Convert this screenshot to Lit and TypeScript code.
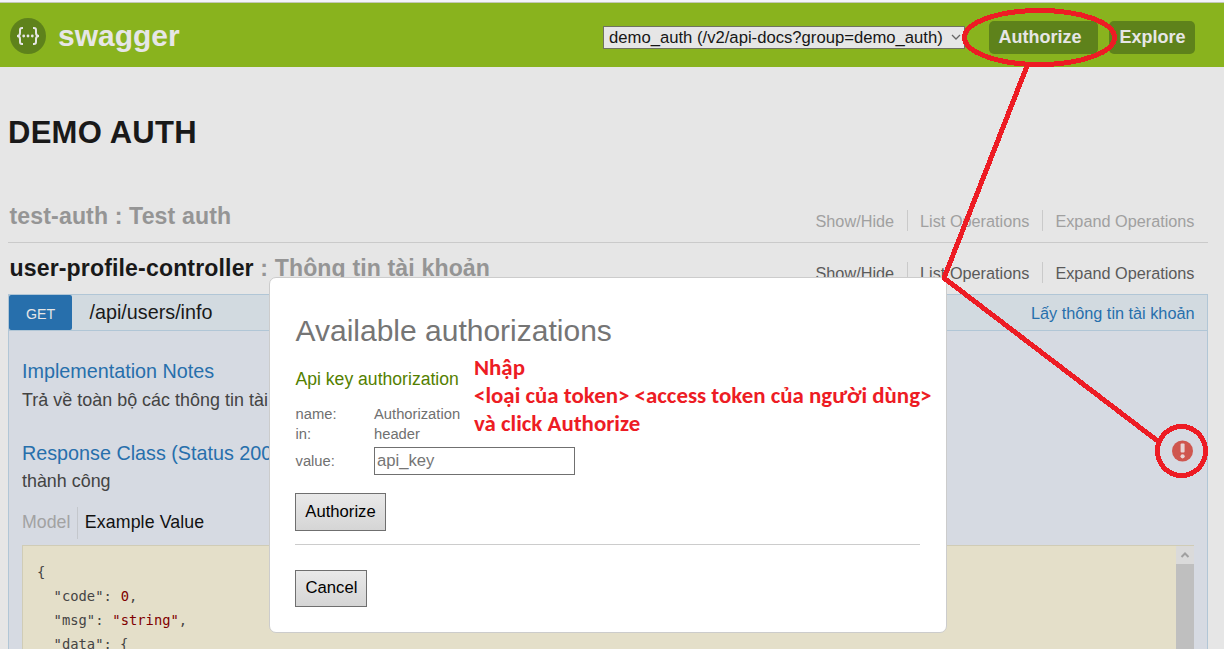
import { LitElement, html, svg, css } from "lit";
import { customElement, property } from "lit/decorators.js";

@customElement("resource-heading")
class ResourceHeading extends LitElement {
  @property() name = "";
  @property() description = "";
  @property({ type: Boolean, reflect: true }) active = false;

  static styles = css`
    :host {
      display: flex;
      justify-content: space-between;
      box-sizing: border-box;
      height: 52px;
      margin: 0 16px 0 8px;
      border-bottom: 1px solid #cacaca;
      color: #959595;
    }
    :host([active]) {
      border-bottom-color: transparent;
    }
    .title {
      margin: 0;
      padding: 11px 0 0 1.5px;
      font-size: 23.1px;
      line-height: 28px;
      font-weight: 700;
      letter-spacing: 0.13px;
      white-space: pre;
    }
    :host([active]) .name {
      color: #191919;
    }
    .ops {
      display: flex;
      margin: 19px 13.5px 0 0;
      padding: 0;
      list-style: none;
      height: 21px;
      font-size: 16.25px;
      line-height: 22px;
      color: #a0a0a0;
    }
    :host([active]) .ops {
      color: #5a5a5a;
    }
    .op + .op {
      border-left: 1px solid #cacaca;
      margin-left: 13px;
      padding-left: 12px;
    }
  `;

  render() {
    return html`
      <h2 class="title"><span class="name">${this.name}</span> : ${this.description}</h2>
      <ul class="ops">
        ${["Show/Hide", "List Operations", "Expand Operations"].map((o) => html`<li class="op">${o}</li>`)}
      </ul>
    `;
  }
}

@customElement("auth-dialog")
class AuthDialog extends LitElement {
  static styles = css`
    :host {
      display: block;
      box-sizing: border-box;
      background: #fff;
      border: 1px solid #ccc;
      border-radius: 7px;
      padding: 36px 26px 0 25px;
      color: #707070;
    }
    .title {
      margin: 0;
      font-size: 30px;
      line-height: 34px;
      font-weight: 400;
      color: #757575;
      padding-left: 0.5px;
    }
    .scheme {
      margin-top: 20px;
      padding-left: 0.5px;
      font-size: 17.6px;
      line-height: 22px;
      color: #547f00;
    }
    .fields {
      display: grid;
      grid-template-columns: 79px 201px;
      grid-template-rows: 20px 20px 34px;
      align-items: center;
      margin-top: 14px;
      font-size: 14.75px;
      line-height: 20px;
    }
    .label {
      padding-left: 0.5px;
    }
    .field {
      box-sizing: border-box;
      height: 28px;
      border: 1px solid #707070;
      padding: 0 2px;
      font-size: 16.67px;
      line-height: 26px;
      color: #757575;
    }
    .button {
      display: block;
      box-sizing: border-box;
      border: 1px solid #6f6f6f;
      background: linear-gradient(#e9e9e9, #d5d5d5);
      padding: 0;
      font: 16.67px "Liberation Sans", Arial, sans-serif;
      color: #000;
    }
    .submit {
      width: 91px;
      height: 38px;
      margin-top: 15px;
    }
    .rule {
      height: 1px;
      margin-top: 13px;
      background: #ccc;
    }
    .cancel {
      width: 72px;
      height: 37px;
      margin-top: 25px;
      padding: 0 0 2px 1px;
    }
  `;

  render() {
    return html`
      <h3 class="title">Available authorizations</h3>
      <div class="scheme">Api key authorization</div>
      <div class="fields">
        <span class="label">name:</span><span>Authorization</span>
        <span class="label">in:</span><span>header</span>
        <span class="label">value:</span>
        <div class="field">api_key</div>
      </div>
      <button class="button submit">Authorize</button>
      <div class="rule"></div>
      <button class="button cancel">Cancel</button>
    `;
  }
}

@customElement("app-root")
class AppRoot extends LitElement {
  static styles = css`
    :host {
      display: block;
      position: relative;
      height: 649px;
      overflow: hidden;
      background: #e6e6e6;
      font-family: "Liberation Sans", Arial, sans-serif;
    }
    .bar {
      display: flex;
      align-items: center;
      box-sizing: border-box;
      height: 67px;
      padding: 2px 29px 0 10px;
      border-top: 2px solid #f3f3fb;
      background: linear-gradient(#c3c8b8 1px, #89b31e 1px);
      background-origin: padding-box;
    }
    .logo {
      width: 36px;
      height: 36px;
    }
    .brand {
      flex: 1;
      margin-left: 12px;
      font-size: 30px;
      line-height: 34px;
      font-weight: 700;
      color: #e6e6e6;
    }
    .picker {
      display: flex;
      align-items: center;
      box-sizing: border-box;
      width: 362px;
      height: 23px;
      margin-top: 3px;
      border: 1px solid #6f7360;
      background: #e6e6e6;
      padding-left: 5px;
      font-size: 16.67px;
      line-height: 21px;
      color: #161616;
      white-space: nowrap;
    }
    .chevron {
      width: 10px;
      height: 8px;
      margin-left: 8px;
    }
    .action {
      box-sizing: border-box;
      height: 33px;
      margin-top: 3px;
      border-radius: 5px;
      background: #5e821b;
      padding-left: 9.5px;
      font-size: 18px;
      line-height: 32px;
      font-weight: 700;
      color: #e6e6e6;
    }
    .authorize {
      width: 109px;
      margin-left: 24px;
    }
    .explore {
      width: 86px;
      margin-left: 11px;
      padding-left: 10.5px;
    }
    .api-title {
      margin: 47px 0 0 8px;
      font-size: 31px;
      line-height: 38px;
      font-weight: 700;
      letter-spacing: 0.25px;
      color: #191919;
    }
    .resources {
      margin-top: 39px;
    }
    .operation {
      box-sizing: border-box;
      height: 380px;
      margin: -1px 16px 0 8px;
      border: 1px solid #b1c6d6;
      background: #d6dae2;
    }
    .op-head {
      display: flex;
      align-items: center;
      height: 35px;
      border-bottom: 1px solid #b1c6d6;
      background: #d2dae0;
    }
    .method {
      width: 63px;
      height: 35px;
      border-radius: 2px;
      background: #276fac;
      color: #e6e6e6;
      font-size: 14.2px;
      line-height: 39px;
      text-align: center;
    }
    .path {
      flex: 1;
      margin: -2px 0 0 17.5px;
      font-size: 19.75px;
      line-height: 24px;
      color: #191919;
    }
    .summary {
      margin-right: 12.5px;
      padding-top: 2px;
      font-size: 16.25px;
      color: #276fac;
    }
    .op-body {
      padding: 27px 13px 0;
      font-size: 17.9px;
      line-height: 28px;
      color: #434343;
    }
    .section {
      margin: 0;
      font-size: 19.75px;
      line-height: 27px;
      font-weight: 400;
      color: #276fac;
    }
    .notes {
      margin-top: 1px;
      letter-spacing: 0.03px;
    }
    .response {
      margin-top: 26px;
    }
    .tabs {
      display: flex;
      margin-top: 12px;
      height: 32px;
      line-height: 30px;
      font-size: 17.75px;
      color: #a2a2a2;
    }
    .tab-active {
      margin-left: 7px;
      border-left: 1px solid #c4c7cc;
      padding-left: 6.5px;
      letter-spacing: 0.1px;
      color: #111;
    }
    .snippet {
      display: flex;
      justify-content: space-between;
      margin-top: 6px;
      border: 1px solid #d0ccb6;
      border-right: 0;
      background: #e4dfc9;
      height: 200px;
    }
    .code {
      padding: 14px 0 0 14px;
      font-family: Consolas, "DejaVu Sans Mono", monospace;
      font-size: 13.8px;
      color: #444;
    }
    .line {
      display: flex;
      height: 24px;
      line-height: 24px;
      white-space: pre;
    }
    .value {
      color: #800000;
      padding-left: 0.6px;
    }
    .scrollbar {
      width: 18px;
      background: #bfbfbf;
    }
    .scroll-up {
      display: block;
      width: 18px;
      height: 18px;
      background: #dadada;
    }
    .dialog {
      position: absolute;
      left: 269px;
      top: 277px;
      width: 678px;
      height: 356px;
    }
    .hint {
      position: absolute;
      left: 474px;
      top: 353px;
      font-family: Carlito, Lato, "Open Sans", sans-serif;
      font-size: 22.9px;
      line-height: 28px;
      font-weight: 700;
      color: #ed1c24;
      white-space: nowrap;
    }
    .marks {
      position: absolute;
      left: 0;
      top: 0;
      width: 1224px;
      height: 649px;
    }
  `;

  private marks() {
    return svg`
      <circle cx="1182.5" cy="451" r="10.5" fill="#cf564e"/>
      <rect x="1180.6" y="443.5" width="4" height="9" rx="1" fill="#e8d5d5"/>
      <circle cx="1182.6" cy="456.3" r="2.1" fill="#e8d5d5"/>
      <g fill="none" stroke="#ed1c24" stroke-width="5" shape-rendering="crispEdges">
        <ellipse cx="1039.5" cy="37.5" rx="75" ry="27"/>
        <path d="M1027 66L944 278L1159 442" stroke-linejoin="bevel"/>
        <ellipse cx="1181.5" cy="451" rx="24" ry="24.5"/>
      </g>`;
  }

  render() {
    return html`
      <header class="bar">
        <svg class="logo" viewBox="0 0 36 36">
          <circle cx="18" cy="18" r="18" fill="#5e821b" />
          <g fill="none" stroke="#e6e6e6" stroke-width="2">
            <path d="M13 10h-1q-2 0-2 2v3q0 3-3 3q3 0 3 3v3q0 2 2 2h1" />
            <path d="M23 10h1q2 0 2 2v3q0 3 3 3q-3 0-3 3v3q0 2-2 2h-1" />
          </g>
          <g fill="#e6e6e6">
            <circle cx="13.7" cy="18" r="1.4" />
            <circle cx="18" cy="18" r="1.4" />
            <circle cx="22.3" cy="18" r="1.4" />
          </g>
        </svg>
        <div class="brand">swagger</div>
        <div class="picker">
          demo_auth (/v2/api-docs?group=demo_auth)
          <svg class="chevron" viewBox="0 0 10 8"><path d="M1 2l4 4 4-4" fill="none" stroke="#666" stroke-width="1.3" /></svg>
        </div>
        <div class="action authorize">Authorize</div>
        <div class="action explore">Explore</div>
      </header>
      <h1 class="api-title">DEMO AUTH</h1>
      <div class="resources">
        <resource-heading name="test-auth" description="Test auth"></resource-heading>
        <resource-heading active name="user-profile-controller" description="Thông tin tài khoản"></resource-heading>
      </div>
      <section class="operation">
        <div class="op-head">
          <span class="method">GET</span>
          <span class="path">/api/users/info</span>
          <span class="summary">Lấy thông tin tài khoản</span>
        </div>
        <div class="op-body">
          <h4 class="section">Implementation Notes</h4>
          <div class="notes">Trả về toàn bộ các thông tin tài khoản</div>
          <h4 class="section response">Response Class (Status 200)</h4>
          <div>thành công</div>
          <div class="tabs"><span>Model</span><span class="tab-active">Example Value</span></div>
          <div class="snippet">
            <div class="code">
              <div class="line">{</div>
              <div class="line"><span>  "code": </span><span class="value">0</span><span>,</span></div>
              <div class="line"><span>  "msg": </span><span class="value">"string"</span><span>,</span></div>
              <div class="line">  "data": {</div>
            </div>
            <div class="scrollbar">
              <svg class="scroll-up" viewBox="0 0 18 18"><path d="M5.5 11L9 7.5l3.5 3.5" fill="none" stroke="#a0a0a0" stroke-width="2" /></svg>
            </div>
          </div>
        </div>
      </section>
      <auth-dialog class="dialog"></auth-dialog>
      <div class="hint">Nhập<br />&lt;loại của token&gt; &lt;access token của người dùng&gt;<br />và click Authorize</div>
      <svg class="marks" viewBox="0 0 1224 649">${this.marks()}</svg>
    `;
  }
}
